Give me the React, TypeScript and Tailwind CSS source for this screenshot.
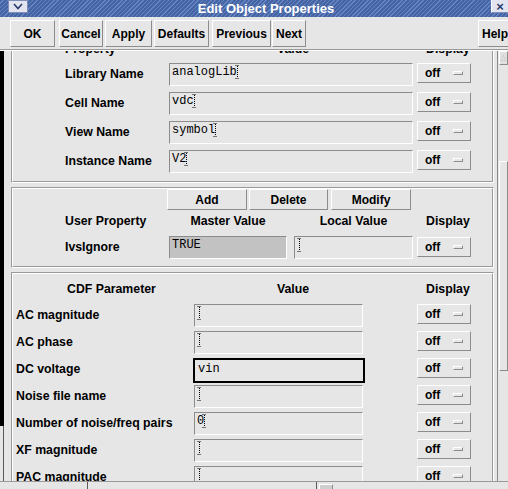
import React from "react";

const raised = "border border-t-white border-l-white border-r-[#8c8c8c] border-b-[#8c8c8c]";
const sunken = "border border-t-[#8c8c8c] border-l-[#8c8c8c] border-r-white border-b-white";
const mono = "font-['Liberation_Mono',monospace] text-[12px] leading-[14px]";

function Cursor({ className = "" }: { className?: string }) {
  return (
    <svg width="5" height="14" viewBox="0 0 5 14" className={`block shrink-0 ${className}`}>
      <path d="M2.5 1 V13" stroke="#000" strokeWidth="1" strokeDasharray="1 1" />
      <path d="M0.5 0.5 H4.5 M0.5 13.5 H4.5" stroke="#000" strokeWidth="1" strokeDasharray="1 1" />
    </svg>
  );
}

function Field({ w, text, cursor = true, bg = "bg-[#e6e6e6]" }: { w: string; text?: string; cursor?: boolean; bg?: string }) {
  return (
    <div className={`${w} h-[23px] ${sunken} ${bg} pl-[2px] pt-[1px] flex items-start overflow-hidden ${mono}`}>
      {text ? <span>{text}</span> : null}
      {cursor ? <Cursor className={text ? "-ml-[2px]" : ""} /> : null}
    </div>
  );
}

function Off() {
  return (
    <div className={`w-[54px] h-[20px] ${raised} flex items-center pl-[7px] pr-[7px] text-[12px] font-bold leading-none`}>
      <span>off</span>
      <span className={`ml-auto w-[10px] h-[4px] ${raised}`} />
    </div>
  );
}

function Section({ children, className = "" }: { children: React.ReactNode; className?: string }) {
  return (
    <div className="border border-t-[#9a9a9a] border-l-[#9a9a9a] border-r-white border-b-white">
      <div className={`border border-t-white border-l-white border-r-[#9a9a9a] border-b-[#9a9a9a] flex flex-col ${className}`}>
        {children}
      </div>
    </div>
  );
}

function Btn({ label, w }: { label: string; w: string }) {
  return (
    <div className={`${w} h-[27px] ${raised} flex items-center justify-center text-[12px] font-bold shrink-0`}>
      {label}
    </div>
  );
}

function Row1({ label, value }: { label: string; value: string }) {
  return (
    <div className="flex h-[23px] items-start">
      <div className="w-[156px] h-full flex items-center pl-[52px] text-[12.3px] font-bold">{label}</div>
      <Field w="w-[244px]" text={value} />
      <div className="ml-[4px]">
        <Off />
      </div>
    </div>
  );
}

function Row3({ label, value, focused = false }: { label: string; value?: string; focused?: boolean }) {
  return (
    <div className="flex h-[23px] items-start">
      <div className="w-[181px] h-full flex items-center pl-[3px] text-[12.3px] font-bold whitespace-nowrap">{label}</div>
      {focused ? (
        <div className={`w-[172px] h-[25px] -ml-[1px] border-2 border-black bg-[#e6e6e6] pl-[3px] pt-[2px] ${mono}`}>{value}</div>
      ) : (
        <Field w="w-[169px]" text={value} />
      )}
      <div className={focused ? "ml-[52px]" : "ml-[54px]"}>
        <Off />
      </div>
    </div>
  );
}

export default function App() {
  return (
    <div className="w-[508px] h-[489px] overflow-hidden bg-[#e6e6e6] flex flex-col font-['Liberation_Sans',Arial,sans-serif] text-black">
      {/* title bar */}
      <div className="h-[17px] shrink-0 flex items-start bg-[repeating-linear-gradient(135deg,#4464a4_0px,#4464a4_2px,#6684c2_2px,#6684c2_3px)]">
        <div className="ml-[8px] w-[20px] h-[13px] bg-[#e2e5f0] border border-[#7d8db8] flex items-center justify-center">
          <svg width="10" height="7" viewBox="0 0 10 7">
            <path d="M1 1 L5 5.5 L9 1" stroke="#2a3a6a" strokeWidth="1.6" fill="none" />
          </svg>
        </div>
        <div className="flex-1 h-full flex items-center justify-center pl-[13px] text-white text-[13px] font-bold leading-none">
          Edit Object Properties
        </div>
        <div className="w-[17px] h-[13px] bg-[#e2e5f0] border border-l-white border-t-0 border-r-0 border-b-[#7d8db8] flex items-center justify-center text-[#2a3a6a] text-[13px] font-bold leading-none">
          ×
        </div>
      </div>

      {/* button bar */}
      <div className="h-[33px] shrink-0 border-b border-b-[#9a9a9a] flex flex-col">
        <div className="flex items-start pt-[3px] pl-[10px] overflow-hidden">
          <Btn label="OK" w="w-[45px]" />
          <div className="ml-[4px]"><Btn label="Cancel" w="w-[44px]" /></div>
          <div className="ml-[2px]"><Btn label="Apply" w="w-[47px]" /></div>
          <div className="ml-[2px]"><Btn label="Defaults" w="w-[55px]" /></div>
          <div className="ml-[3px]"><Btn label="Previous" w="w-[59px]" /></div>
          <div className="ml-[1px]"><Btn label="Next" w="w-[34px]" /></div>
          <div className="ml-auto -mr-[4px]"><Btn label="Help" w="w-[34px]" /></div>
        </div>
      </div>

      {/* main */}
      <div className="h-[431px] shrink-0 flex border-t border-t-white">
        <div className="w-[4px] shrink-0 flex flex-col">
          <div className="h-[375px] bg-black" />
          <div className="flex-1 border-r border-r-[#5a5a5a]" />
        </div>
        <div className="w-[493px] shrink-0 overflow-hidden">
          <div className="-mt-[25px] pl-[7px] pr-[3px] flex flex-col gap-[4px]">
            {/* section 1 */}
            <Section className="pt-[10px] pb-[8px] gap-[6px]">
              <div className="flex h-[23px] -mb-[4px] items-center text-[12.3px] font-bold">
                <div className="w-[156px] pl-[52px]">Property</div>
                <div className="w-[244px] pl-[108px]">Value</div>
                <div className="ml-[4px] w-[54px] pl-[9px]">Display</div>
              </div>
              <Row1 label="Library Name" value="analogLib" />
              <Row1 label="Cell Name" value="vdc" />
              <Row1 label="View Name" value="symbol" />
              <Row1 label="Instance Name" value="V2" />
            </Section>

            {/* section 2 */}
            <Section className="pb-[7px]">
              <div className="flex h-[21px] pl-[154px]">
                <div className={`w-[80px] h-[21px] ${raised} flex items-center justify-center text-[12px] font-bold`}>Add</div>
                <div className={`ml-[2px] w-[79px] h-[21px] ${raised} flex items-center justify-center text-[12px] font-bold`}>Delete</div>
                <div className={`ml-[3px] w-[80px] h-[21px] ${raised} flex items-center justify-center text-[12px] font-bold`}>Modify</div>
              </div>
              <div className="flex h-[23px] items-center text-[12.3px] font-bold">
                <div className="w-[156px] pl-[52px]">User Property</div>
                <div className="w-[118px] text-center">Master Value</div>
                <div className="ml-[7px] w-[119px] text-center">Local Value</div>
                <div className="ml-[4px] w-[54px] pl-[9px]">Display</div>
              </div>
              <div className="mt-[3px] flex h-[23px] items-start">
                <div className="w-[156px] h-full flex items-center pl-[52px] text-[12.3px] font-bold">IvsIgnore</div>
                <Field w="w-[118px]" text="TRUE" cursor={false} bg="bg-[#c2c2c2]" />
                <div className="ml-[7px]">
                  <Field w="w-[119px]" />
                </div>
                <div className="ml-[4px] mt-[1px]">
                  <Off />
                </div>
              </div>
            </Section>

            {/* section 3 */}
            <Section className="pt-[4px] pb-[8px] gap-[4px]">
              <div className="flex h-[22px] items-center text-[12.3px] font-bold">
                <div className="w-[181px] pl-[54px]">CDF Parameter</div>
                <div className="w-[169px] pl-[83px]">Value</div>
                <div className="ml-[54px] w-[54px] pl-[9px]">Display</div>
              </div>
              <Row3 label="AC magnitude" />
              <Row3 label="AC phase" />
              <Row3 label="DC voltage" value="vin" focused />
              <Row3 label="Noise file name" />
              <Row3 label="Number of noise/freq pairs" value="0" />
              <Row3 label="XF magnitude" />
              <Row3 label="PAC magnitude" />
              <Row3 label="PAC phase" />
            </Section>
          </div>
        </div>
        {/* scrollbar */}
        <div className="w-[11px] shrink-0 border-l border-l-[#8a8a8a] flex flex-col">
          <div className={`h-[14px] ml-[1px] ${raised} bg-[#e0e0e0] flex items-center justify-center`}>
            <svg width="8" height="8" viewBox="0 0 8 8">
              <path d="M4 1 L7 7 L1 7 Z" fill="none" stroke="#bdbdbd" strokeWidth="1" strokeDasharray="1 1" />
            </svg>
          </div>
          <div className="h-[96px]" />
          <div className={`h-[210px] ml-[1px] ${raised}`} />
          <div className="flex-1" />
        </div>
      </div>

      {/* bottom strip */}
      <div className="h-[8px] shrink-0 border-t border-t-[#9a9a9a] flex">
        <div className="w-[88px] border-r border-r-[#5a5a5a]" />
        <div className="w-[229px] border-r border-r-[#5a5a5a]" />
        <div className={`ml-[2px] mt-[2px] w-[14px] h-[6px] ${raised} bg-[#cfcfcf]`} />
      </div>
    </div>
  );
}
